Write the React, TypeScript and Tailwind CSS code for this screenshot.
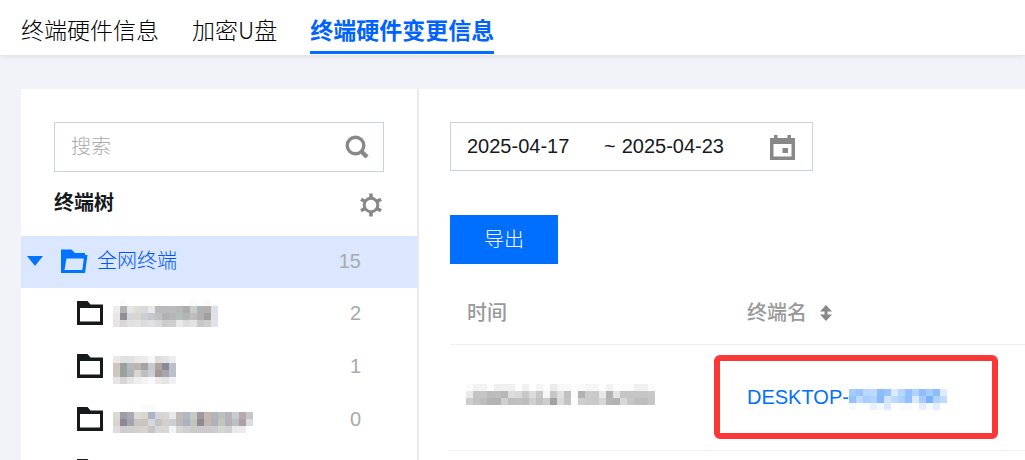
import { useState } from 'react'

const TABS = ['终端硬件信息', '加密U盘', '终端硬件变更信息']

// Masked labels, one string per row of 7px cells. "-" leaves a cell empty.
const MASK_A = [
  '- fbfbfb - - - - - - - - - fafcfb - fbfbfb -',
  'eeecec b2b2b4 e2e4e5 dfddd9 d9dad8 e7e9eb bbbbbe b9b9bb bbbbbe b5b8b9 abadab cacbcb adb2b6 b6aea9 d9e0f0',
  'e9e6e5 929096 d2d6d9 dbd5cf cbced6 c4c7cb c0c0c2 b1b0b3 b5b4b7 b5bdbf b3b5b2 bebdbf b2b0b1 9fa09f e1e0e7',
  'e6e4e2 d9d7d8 e0e1e3 e4e2e0 dcdcde e0e1e3 d9d9dc cccccf cfcfd0 e9e9eb dcdcda e4e3e4 cac7c9 cfd0cc e3e2e8'
]

const MASK_B = [
  '- - - - - - - - -',
  'ece8e6 dfe0df dfe2e1 eee7e8 ebebee f5f6f9 e1dcda e3e2e4 ecedf2',
  'cfc5c2 97a398 b3babf bab5b0 a5a3a5 c8c9cf b0a39b 8b8994 bcc0ca',
  'cfc7c5 97a398 afb4bd d7d5cc bebfc4 cbced5 a39895 a5a5b2 bcc0ca',
  'e7e5e1 d5d6d5 e3e4e3 efeeee f5f3f2 fafafd ede7e6 e4e3e7 f0f0f2'
]

const MASK_C = [
  '- - - - fafcfb fafcfb - - - - - - - - - - - - - -',
  'dcdad0 9f9ca9 a9a9b2 dcdbdc dcd5c9 acb5c6 d4d4d8 d7d6d4 e8e8e6 c0bbb6 b2b7c4 c6cbc2 9d9aa2 c3b7b0 b1b4bb bbbfbd b5b5b9 c6cccf b6a9ad c6c5c9',
  'dcd2cb 8e8999 a4a4ac c9c5c1 cac4be d6d7dc c4c4c8 d6cfc9 cbcfcf bfb9b8 adb0c0 c1c4b8 8f8a92 c3b6ae b0b0b9 c1c5bd b3b1b7 bac0c4 aca0a5 dcdbdd',
  'e2dcdb cfcccf cfcfd0 d2d1ce d6d3d2 c5c5c4 d6d7da d9d7d4 f1f4f4 d9d6d1 ceced3 c9cbc4 cbc9ce cdc9c8 ccccd2 d3d6d2 cfcfd0 e9e8ea ebebec -'
]

const MASK_TIME = [
  'fbfbfb f2f2f2 f2f2f2 fcfcfc efefef f0f0f0 f0f0f0 fdfdfd f1f1f1 fefefe f5f5f5 fefefe ebebeb f7f7f7 f7f7f7 fefefe fafafa f5f5f5 f5f5f5 fdfdfd f3f3f3 fdfdfd fbfbfb fbfbfb f0f0f0 f0f0f0 fbfbfb',
  'eaeaea c4c4c4 c5c5c5 bbbbbb bdbdbd b7b7b7 dcdcdc d8d8d8 c8c8c8 dbdbdb c7c7c7 f6f6f6 c7c7c7 e0e0e0 c0c0c0 fbfbfb b2b2b2 cbcbcb c9c9c9 e8e8e8 b2b2b2 e4e4e4 c5c5c5 c5c5c5 c5c5c5 c5c5c5 c8c8c8',
  'cdcdcd c2c2c2 bdbdbd b4b4b4 b3b3b3 cfcfcf bebebe c0c0c0 bdbdbd cfcfcf c1c1c1 cdcdcd a2a2a2 dadada c3c3c3 - cecece cacaca cacaca d7d7d7 b5b5b5 b2b2b2 d8d8d8 c6c6c6 bfbfbf bdbdbd c6c6c6'
]

const MASK_NAME = [
  'a5ccff 9bc5ff b8d7ff bcd9ff 8bbcff 99c4ff dbeaff b6d5ff 94c1ff b2d3ff 8fbeff a5ccff 8dbdff dfecff',
  '94c1ff bedaff aaceff b2d3ff 87baff d2e5ff bfdaff aed0ff 92c0ff dbeaff a5caff 7ab2ff b3d3ff bfdbff',
  'f6faff - fcfdff e8f2ff f3f8ff dbeaff - f8fbff f7faff - e2eeff f6faff e2eeff -'
]

const GROUPS = [
  { id: 'a', mask: MASK_A, count: 2 },
  { id: 'b', mask: MASK_B, count: 1 },
  { id: 'c', mask: MASK_C, count: 0 }
]

function Mask({ rows, className }: { rows: string[]; className?: string }) {
  const cells = rows.map((row) => row.split(' '))
  const width = cells[0].length * 7
  const height = cells.length * 7
  return (
    <svg width={width} height={height} shapeRendering="crispEdges" className={className} aria-hidden="true">
      {cells.map((row, y) =>
        row.map((fill, x) =>
          fill === '-' ? null : <rect key={`${x}-${y}`} x={x * 7} y={y * 7} width={7} height={7} fill={`#${fill}`} />
        )
      )}
    </svg>
  )
}

function FolderIcon() {
  return (
    <svg width="26" height="24" viewBox="0 0 26 24" className="shrink-0 text-[#171a1a]" aria-hidden="true">
      <path fill="currentColor" fillRule="evenodd" d="M0 0h10.500L13.500 3.500H26V24H0zM3 7v13.500h20V7z" />
    </svg>
  )
}

function FolderOpenIcon() {
  return (
    <svg width="27" height="24" viewBox="0 0 27 24" className="shrink-0" aria-hidden="true">
      <path fill="#0073ff" fillRule="evenodd" d="M0 .5h10.500L14 4h10v2h2.500L24 24H0zM5.500 9.500L3.500 21h17.800L22.800 9.500z" />
    </svg>
  )
}

function SearchIcon() {
  return (
    <svg width="24" height="24" viewBox="0 0 24 24" fill="none" stroke="#888" aria-hidden="true">
      <circle cx="10.500" cy="10.500" r="8.300" strokeWidth="3.400" />
      <path d="M16 16l6 6" strokeWidth="4.400" />
    </svg>
  )
}

function GearIcon() {
  return (
    <svg width="24" height="24" viewBox="0 0 24 24" fill="none" stroke="#888" aria-hidden="true">
      <circle cx="12" cy="12" r="6.800" strokeWidth="3" />
      <path d="M12 .5V5M12 19v4.500M2 6.200l4 2.300M18 15.500l4 2.300M22 6.200l-4 2.300M6 15.500l-4 2.300" strokeWidth="3.600" />
    </svg>
  )
}

function CalendarIcon() {
  return (
    <svg width="25" height="25" viewBox="0 0 25 25" aria-hidden="true">
      <path fill="#888" fillRule="evenodd" d="M4 0h3.500v3h10V0H21v3h4v22H0V3h4zM3.500 9v12.500h18V9z" />
      <path fill="#888" d="M12.500 13H18v5h-5.500z" />
    </svg>
  )
}

export default function App() {
  const [active, setActive] = useState(2)
  const [keyword, setKeyword] = useState('')
  const [start, setStart] = useState('2025-04-17')
  const [end, setEnd] = useState('2025-04-23')

  return (
    <div className="flex min-h-screen flex-col bg-[#f2f3f8] font-['Liberation_Sans','Noto_Sans_CJK_SC',sans-serif] text-[20px] leading-[28px] text-[#171a1d]">
      <header className="bg-white pl-[21px] shadow-[0_1px_6px_rgba(0,0,0,0.1)]">
        <nav className="flex h-[55px] gap-[33px] font-['Noto_Sans_CJK_SC',sans-serif] text-[23px]">
          {TABS.map((tab, i) => (
            <button
              key={tab}
              type="button"
              onClick={() => setActive(i)}
              className={
                i === active
                  ? 'mt-1 h-[50px] border-b-[3px] border-[#006eff] pt-[2px] font-bold text-[#0062ff]'
                  : 'mt-1 h-[50px] border-b-[3px] border-transparent pt-[2px] font-light text-black'
              }
            >
              {tab}
            </button>
          ))}
        </nav>
      </header>

      <main className="mt-[34px] ml-[21px] flex flex-1 bg-white">
        <aside className="h-[371px] w-[398px] shrink-0 overflow-hidden border-r-2 border-[#e8e9f2]">
          <div className="px-[33px] pt-[33px]">
            <label className="flex h-[50px] items-center border border-[#ccd2df] pr-[14px] pl-4">
              <input
                aria-label="搜索"
                placeholder="搜索"
                value={keyword}
                onChange={(e) => setKeyword(e.target.value)}
                className="min-w-0 flex-1 font-light outline-none placeholder:text-[#aaa]"
              />
              <SearchIcon />
            </label>
            <div className="flex h-[64px] items-center justify-between pr-px">
              <h2 className="pb-[2px] font-bold">终端树</h2>
              <button type="button" aria-label="设置" className="pt-[2px]">
                <GearIcon />
              </button>
            </div>
          </div>

          <ul>
            <li className="flex h-[52px] items-center bg-[#dbe7ff] pr-14 pb-[2px] pl-[6px]">
              <svg width="16" height="10" viewBox="0 0 16 10" className="mr-[18px] shrink-0" aria-hidden="true">
                <path fill="#0073ff" d="M0 0h16L8 10z" />
              </svg>
              <FolderOpenIcon />
              <span className="ml-[9px] flex-1 font-light text-[#0055ff]">全网终端</span>
              <span className="text-[#aaa]">15</span>
            </li>
            {GROUPS.map((group) => (
              <li key={group.id} className="flex h-[53px] items-center pr-14 pb-[3px] pl-14">
                <FolderIcon />
                <Mask rows={group.mask} className="ml-[10px]" />
                <span className="ml-auto text-[#aaa]">{group.count}</span>
              </li>
            ))}
            <li className="flex h-[53px] items-center pb-[5px] pl-14">
              <FolderIcon />
            </li>
          </ul>
        </aside>

        <section className="min-w-0 flex-1 pt-[33px] pl-[31px]">
          <div className="flex h-[49px] w-[363px] items-center border border-[#ccd2df] pr-[17px] pl-4">
            <input
              aria-label="开始日期"
              value={start}
              onChange={(e) => setStart(e.target.value)}
              className="w-[137px] pb-[2px] outline-none"
            />
            <span className="pb-[2px]">~</span>
            <input
              aria-label="结束日期"
              value={end}
              onChange={(e) => setEnd(e.target.value)}
              className="ml-[6px] min-w-0 flex-1 pb-[2px] outline-none"
            />
            <button type="button" aria-label="选择日期" className="pt-[2px]">
              <CalendarIcon />
            </button>
          </div>

          <button type="button" className="mt-11 block h-[49px] w-[108px] bg-[#006eff] font-light text-white">
            导出
          </button>

          <table className="mt-4 w-full table-fixed border-collapse text-left">
            <thead>
              <tr className="h-[64px] border-b border-[#f0f1f6] text-[#999]">
                <th className="w-[280px] px-[17px] pt-[2px] font-medium">时间</th>
                <th className="px-[17px] pt-[2px] font-medium">
                  <button type="button" className="flex items-center gap-[13px]">
                    终端名
                    <svg width="12" height="16" viewBox="0 0 12 16" aria-hidden="true">
                      <path fill="#888" d="M6 0l6 6.500H7.500v3H12L6 16 0 9.500h4.500v-3H0z" />
                    </svg>
                  </button>
                </th>
              </tr>
            </thead>
            <tbody>
              <tr className="h-[106px] border-b border-[#f0f1f6]">
                <td className="px-4 pb-[5px]">
                  <Mask rows={MASK_TIME} className="block" />
                </td>
                <td className="relative px-[17px]">
                  <a href="#" className="flex items-center text-[#0070ff]">
                    DESKTOP-
                    <Mask rows={MASK_NAME} className="mt-[5px]" />
                  </a>
                  <span className="pointer-events-none absolute top-[10px] -left-4 h-[84px] w-[284px] rounded-md border-6 border-[#fb3737]" />
                </td>
              </tr>
            </tbody>
          </table>
        </section>
      </main>
    </div>
  )
}
